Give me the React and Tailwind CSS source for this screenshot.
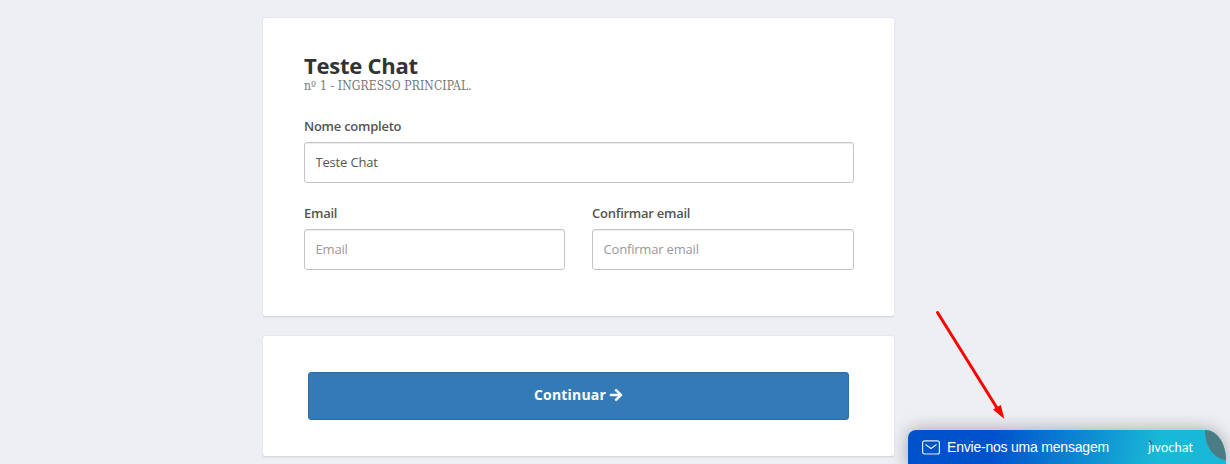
import { FaArrowRight } from 'react-icons/fa';

function Card({ children, className }) {
  return (
    <div className={`w-[633px] bg-white border border-[#e4e9f0] border-b-[#d6dce3] rounded-[4px] shadow-[0_1px_1px_rgba(0,0,0,0.05)] ${className}`}>
      {children}
    </div>
  );
}

function Field({ label, ...props }) {
  return (
    <label className="block min-w-0">
      <span className="block text-[13px] leading-[18px] font-semibold tracking-[-0.25px] text-[#555]">{label}</span>
      <input
        type="text"
        className="mt-[7px] block w-full h-[41px] pl-[10.5px] pr-[11px] pb-[2px] bg-white border border-[#c5c5c5] rounded-[3px] text-[13px] tracking-[-0.18px] text-[#555] placeholder:text-[#999] outline-none shadow-[inset_0_1px_1px_rgba(0,0,0,0.075)]"
        {...props}
      />
    </label>
  );
}

function ChatBar() {
  return (
    <div className="absolute left-[908px] top-[430px] w-[318px] h-[40px] rounded-tl-[8px] rounded-tr-[21px_30px] bg-[linear-gradient(100deg,#0052cc_0%,#0052cc_27%,#19b8d6_78%,#19b8d6_100%)] shadow-[0_0_18px_rgba(0,0,0,0.32)] font-['Liberation_Sans',sans-serif]">
      <div className="flex items-center h-[35px] pl-[14px]">
        <svg width="18" height="15" viewBox="0 0 18 15" fill="none" stroke="#fff" strokeOpacity="0.9" strokeWidth="1.2">
          <rect x="0.6" y="0.8" width="16.8" height="13.2" rx="2" />
          <path d="M3.8 4.8 9 8.5l5.2-3.7" strokeLinecap="round" />
        </svg>
        <span className="ml-[7px] w-[201px] text-[14px] tracking-[-0.21px] text-white whitespace-nowrap">Envie-nos uma mensagem</span>
        <span className="relative font-[Lato,sans-serif] text-[13px] tracking-[0.05px] text-white">
          jıvochat
          <svg className="absolute left-px top-[2px]" width="4" height="5" viewBox="0 0 4 5">
            <path d="M0 0c2 .4 3 2 2.8 4.5C1 3.5 0 2 0 0Z" fill="#39666d" />
          </svg>
        </span>
      </div>
      <svg className="absolute right-0 top-0" width="21" height="30" viewBox="0 0 21 30">
        <path d="M0 0C12 0 21 13 21 30C9 29 0 17 0 0Z" fill="#4b7c86" />
      </svg>
    </div>
  );
}

export default function App() {
  return (
    <div className="relative h-[464px] overflow-hidden bg-[#edeff3] font-['Open_Sans',sans-serif]">
      <div className="flex flex-col gap-[18px] pt-[17px] pl-[262px]">
        <Card className="h-[300px] pl-[41px] pr-[40px] pt-[33px]">
          <h1 className="text-[22px] leading-[28px] tracking-[-0.25px] font-bold text-[#333]">Teste Chat</h1>
          <p className="mt-px font-['DejaVu_Serif_Condensed','DejaVu_Serif',serif] text-[12px] leading-[12px] tracking-[0.14px] text-[#777]">
            nº 1 - INGRESSO PRINCIPAL.
          </p>
          <div className="mt-[25px]">
            <Field label="Nome completo" defaultValue="Teste Chat" />
          </div>
          <div className="mt-[21px] grid grid-cols-[261px_262px] gap-[27px]">
            <Field label="Email" placeholder="Email" />
            <Field label="Confirmar email" placeholder="Confirmar email" />
          </div>
        </Card>
        <Card className="h-[122px] px-[45px] pt-[36px]">
          <button className="flex items-center justify-center gap-[3px] w-[541px] h-[48px] pb-[3px] rounded-[3px] border border-[#2e6da4] bg-[#337ab7] text-[14px] tracking-[0.2px] font-bold text-white">
            Continuar
            <FaArrowRight className="size-[14px]" stroke="currentColor" strokeWidth="16" />
          </button>
        </Card>
      </div>

      {/* flecha hacia el chat */}
      <svg className="absolute left-[930px] top-[306px]" width="80" height="118" viewBox="0 0 80 118">
        <path d="M7.5 6.5 67 102" stroke="#f00" strokeWidth="3" strokeLinecap="round" />
        <path d="M63 103.500 70.800 99 74.300 113Z" fill="#f00" />
      </svg>
      <ChatBar />
    </div>
  );
}
